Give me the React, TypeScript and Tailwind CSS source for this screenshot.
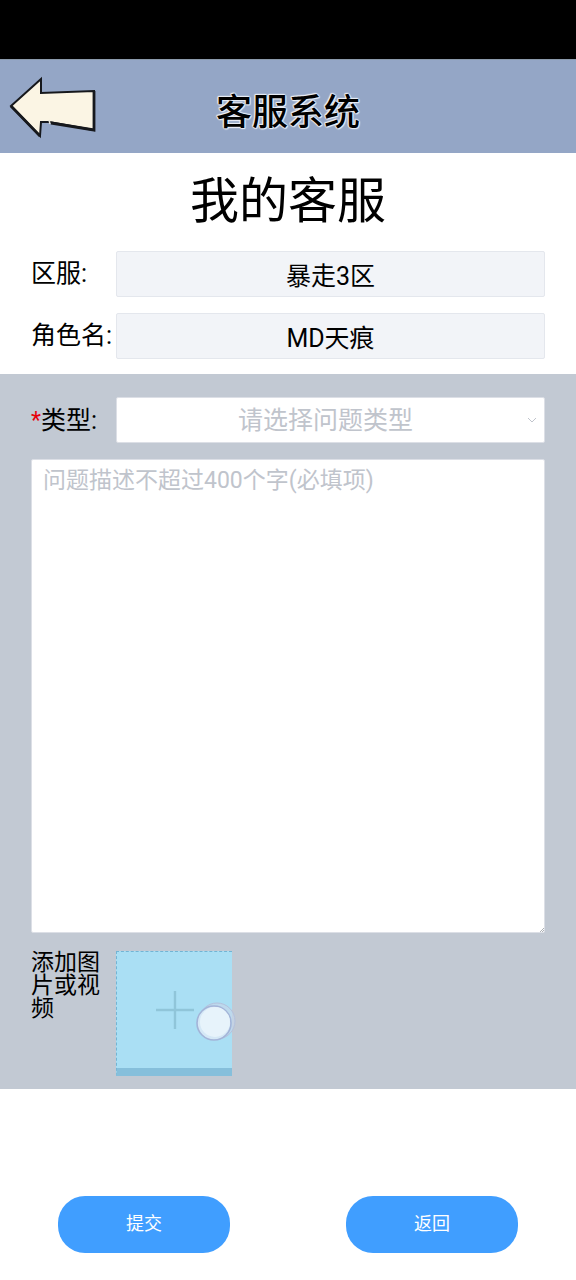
import React from "react";

function BackArrow() {
  return (
    <svg viewBox="0 0 90 64" className="h-16 w-[90px]" fill="none" stroke="#16181c" aria-hidden="true">
      <path
        d="M3 31 L33 4 L33 18 L86 16 L86 55 L41 47 L33 47 L32 61 Z"
        fill="#fbf5e4"
        strokeWidth="2"
      />
      {/* Heavier pen strokes on the lower edges */}
      <path d="M3 31 L32 61 M43 48 L86 55 L86 16" strokeWidth="2.8" />
      <path d="M41 45 L42 49" stroke="#e9e6dc" strokeWidth="1.4" />
    </svg>
  );
}

function ReadonlyField({
  id,
  label,
  value,
}: {
  id: string;
  label: string;
  value: string;
}) {
  return (
    <div className="flex items-center">
      <label htmlFor={id} className="w-[85px] shrink-0 whitespace-nowrap text-[25px] leading-[46px]">
        {label}
      </label>
      <input
        id={id}
        readOnly
        value={value}
        className="h-[46px] w-full min-w-0 rounded-xs border border-[#e4e7ed] bg-[#f2f4f8] px-3 text-center text-[25px] text-black"
      />
    </div>
  );
}

export default function App() {
  return (
    <div className="bg-white font-['Roboto','Noto_Sans_CJK_SC',sans-serif] text-black">
      {/* Status bar */}
      <div className="h-[59px] bg-black" />

      {/* Header */}
      <header className="grid h-[94px] grid-cols-[1fr_auto_1fr] items-center border-t border-[#8b9aac] bg-[#94a6c6] px-2">
        <button type="button" aria-label="返回上一页" className="justify-self-start">
          <BackArrow />
        </button>
        <h1 className="pt-3 text-[36px] leading-[48px] font-medium [text-shadow:1px_0_1px_#e8edf5,-1px_0_1px_#e8edf5,0_1px_1px_#e8edf5,0_-1px_1px_#e8edf5,1px_1px_1px_#e8edf5,-1px_-1px_1px_#e8edf5]">
          客服系统
        </h1>
      </header>

      <form>
        {/* Account info */}
        <section className="px-[31px] pb-[15px]">
          <h2 className="text-center text-[49px] leading-[98px]">我的客服</h2>
          <div className="flex flex-col gap-4">
            <ReadonlyField id="server" label="区服:" value="暴走3区" />
            <ReadonlyField id="role" label="角色名:" value="MD天痕" />
          </div>
        </section>

        {/* Question form */}
        <section className="bg-[#c2c9d3] px-[31px] pt-[23px] pb-[13px]">
          <div className="flex items-center">
            <label htmlFor="type" className="flex h-[46px] w-[85px] shrink-0 items-center whitespace-nowrap pt-0.5 text-[25px]">
              <span className="text-[23px] text-red-600">*</span>类型:
            </label>
            <div className="relative w-full">
              <select
                id="type"
                defaultValue=""
                className="block h-[46px] w-full appearance-none rounded-xs border border-[#dcdfe6] bg-white pt-0.5 pr-[22px] pl-3 text-center text-[25px] text-[#c0c4cc]"
              >
                <option value="">请选择问题类型</option>
              </select>
              <svg
                viewBox="0 0 10 6"
                className="pointer-events-none absolute top-5 right-2 h-1.5 w-2.5"
                fill="none"
                stroke="#c0c4cc"
                aria-hidden="true"
              >
                <path d="M1 1 L5 5 L9 1" />
              </svg>
            </div>
          </div>

          <div className="relative mt-4">
            <textarea
              aria-label="问题描述"
              maxLength={400}
              placeholder="问题描述不超过400个字(必填项)"
              className="block h-[474px] w-full resize-none rounded-xs border border-[#dcdfe6] bg-white px-[11px] py-1 text-[23px] leading-[34px] placeholder:text-[#c0c4cc]"
            />
            <svg
              viewBox="0 0 4 4"
              className="pointer-events-none absolute right-px bottom-px size-1"
              stroke="#8a8f96"
              strokeWidth="0.7"
              aria-hidden="true"
            >
              <path d="M0 4 L4 0 M2 4 L4 2" />
            </svg>
          </div>

          <div className="mt-[18px] flex items-start">
            <label htmlFor="media" className="w-[85px] shrink-0 pr-3 text-[23px] leading-[23px]">
              添加图片或视频
            </label>
            <div className="relative">
              <label
                htmlFor="media"
                className="flex h-[125px] w-[116px] items-center justify-center border-t border-b-8 border-l border-dashed border-[#72b4d4] bg-[#aadff4] [border-bottom-color:#86bfdb] [border-bottom-style:solid]"
              >
                <svg
                  viewBox="0 0 38 38"
                  className="size-[38px]"
                  stroke="#90c5d9"
                  strokeWidth="2.4"
                  aria-hidden="true"
                >
                  <path d="M19 0 V38 M0 19 H38" />
                </svg>
              </label>
              <input id="media" type="file" accept="image/*,video/*" className="sr-only" />
              {/* Touch pointer */}
              <svg viewBox="0 0 42 42" className="pointer-events-none absolute top-[50px] left-[78px] size-[42px]" aria-hidden="true">
                <circle cx="23" cy="20" r="18" fill="#c4d5ea" fillOpacity="0.7" stroke="#b4c1dc" strokeWidth="1" />
                <circle cx="20" cy="22" r="17" fill="#d5e8f6" stroke="#a3b4d8" strokeWidth="1.6" />
                <circle cx="21" cy="21" r="15" fill="#e7f3fb" />
              </svg>
            </div>
          </div>
        </section>

        {/* Actions */}
        <div className="grid grid-cols-2 justify-items-center pt-[107px] pb-[27px]">
          <button type="submit" className="h-[57px] w-3/5 rounded-[27px] bg-[#409eff] pb-0.5 text-lg text-white">
            提交
          </button>
          <button type="button" className="h-[57px] w-3/5 rounded-[27px] bg-[#409eff] pb-0.5 text-lg text-white">
            返回
          </button>
        </div>
      </form>
    </div>
  );
}
